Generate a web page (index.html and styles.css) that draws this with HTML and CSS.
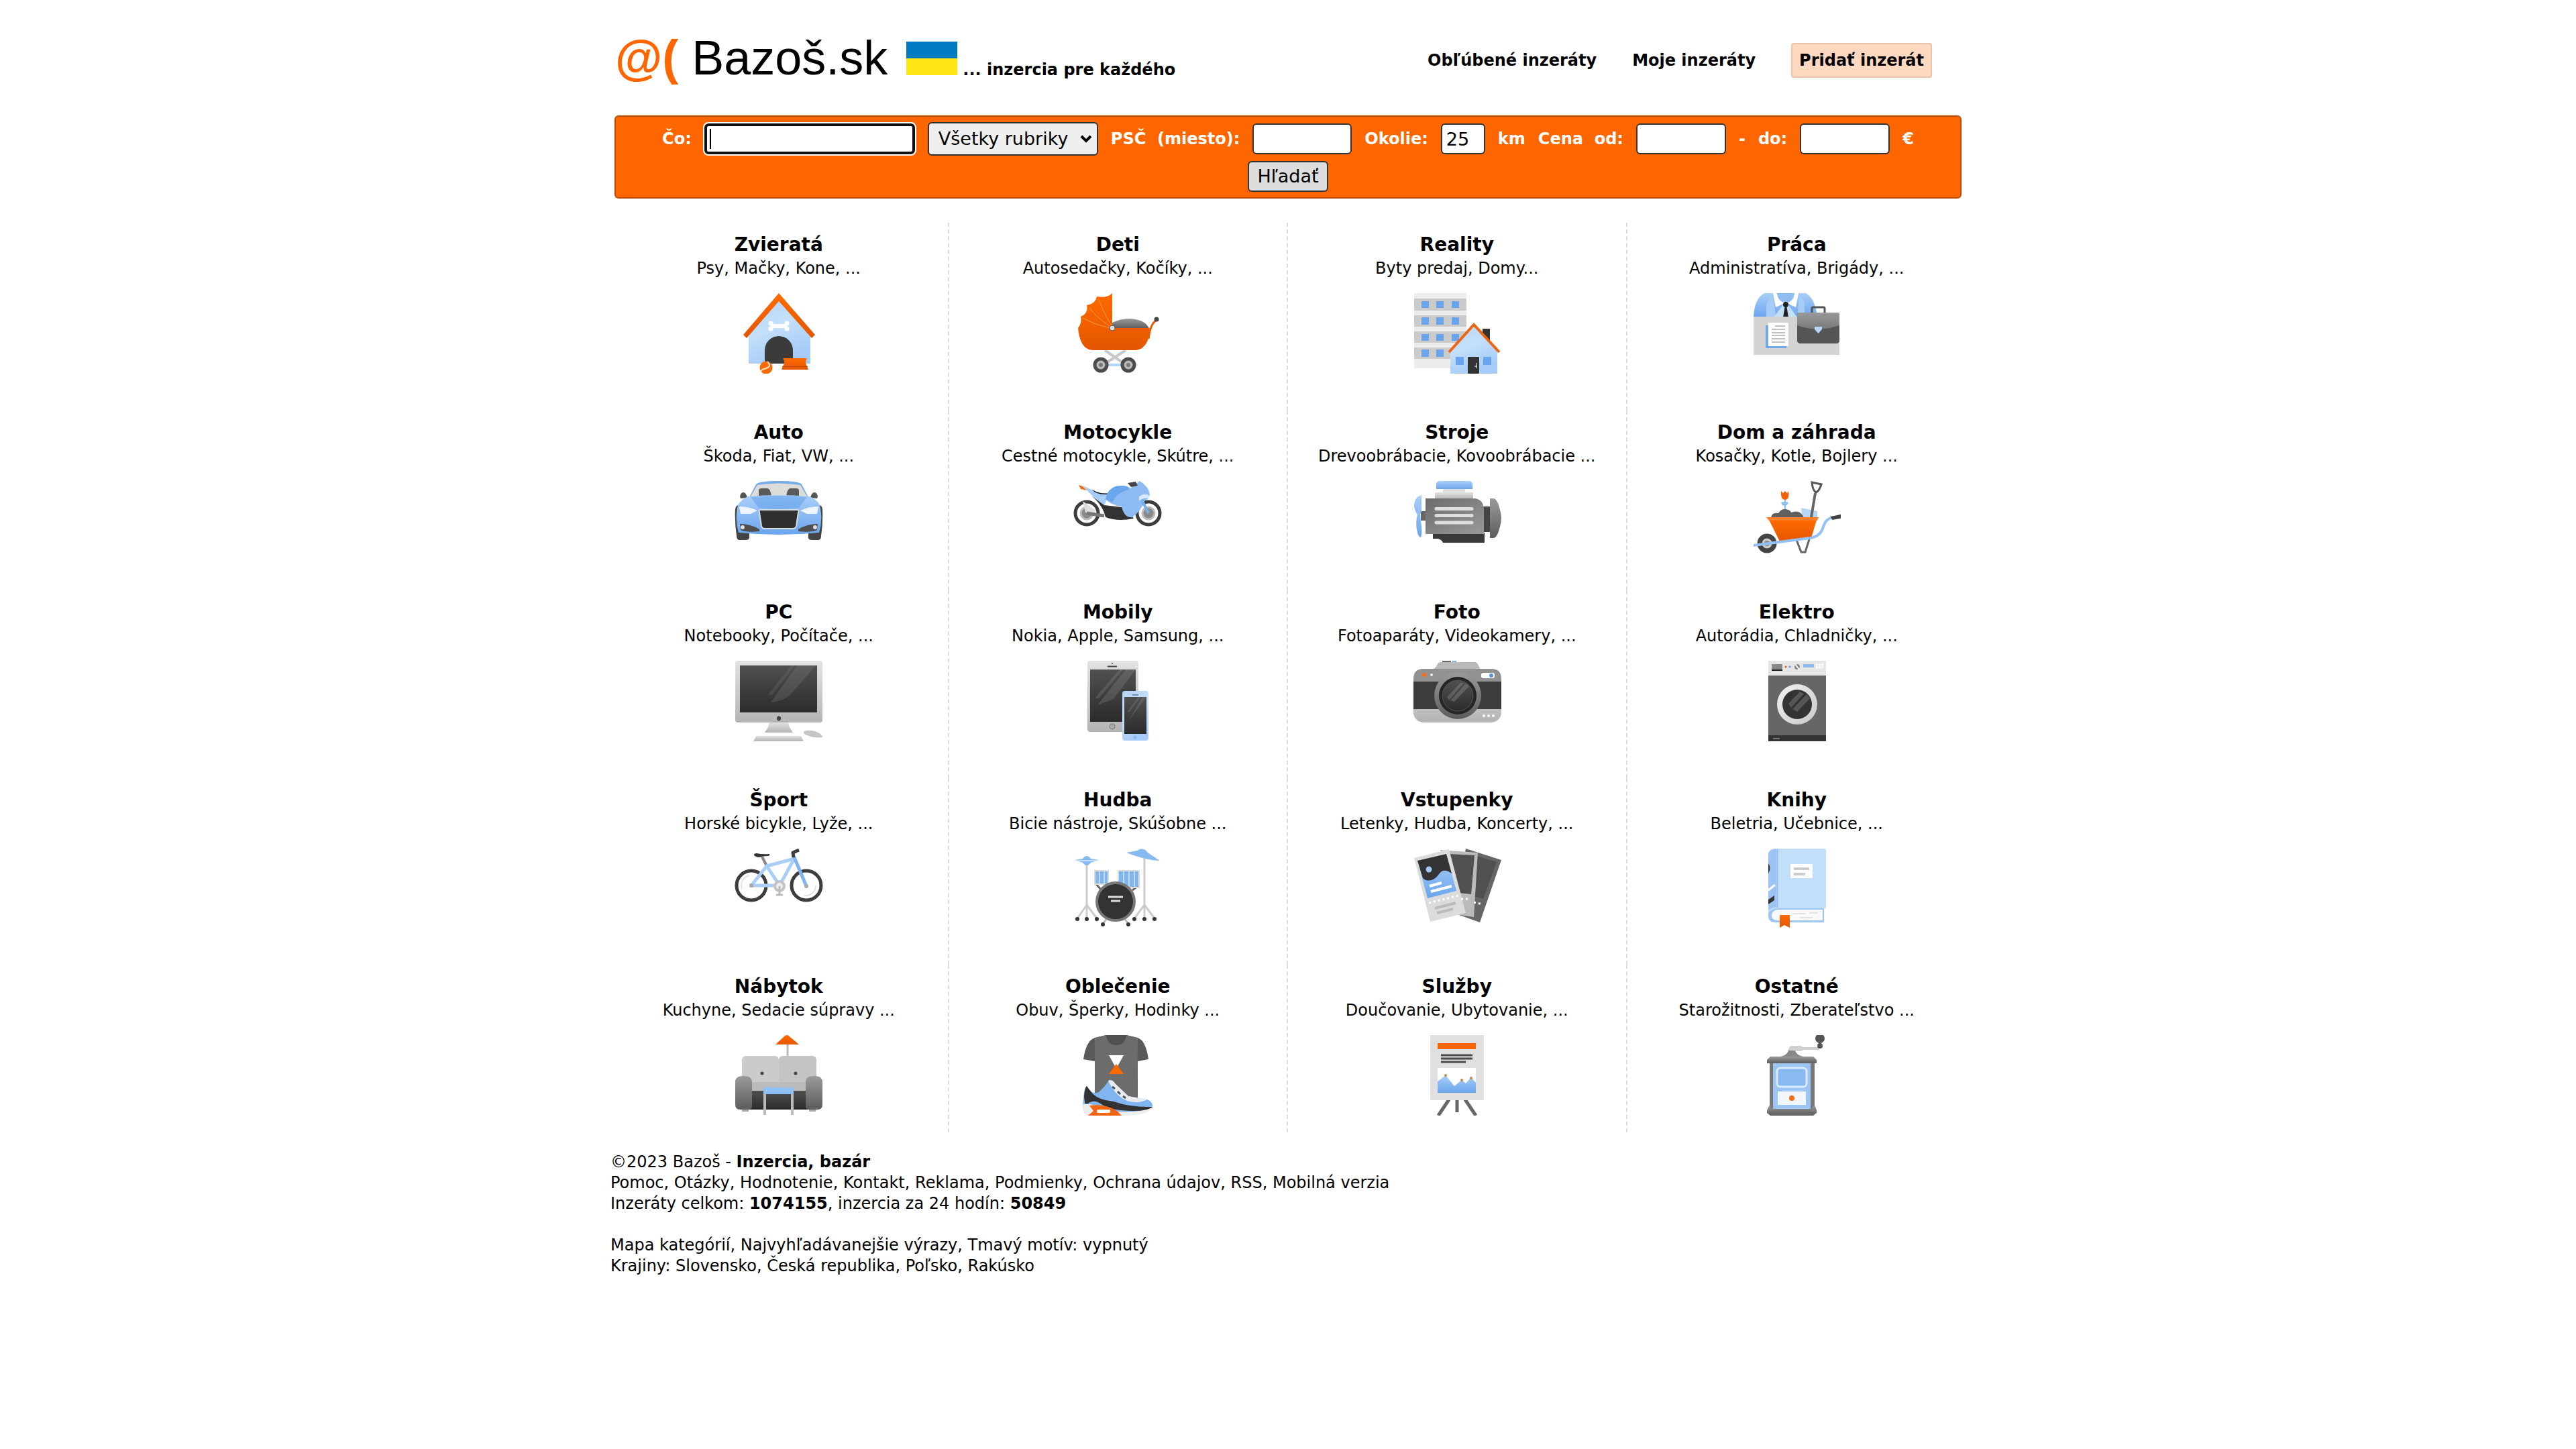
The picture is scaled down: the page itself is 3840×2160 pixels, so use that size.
FILE: index.html
```html
<!DOCTYPE html>
<html lang="sk">
<head>
<meta charset="utf-8">
<meta name="viewport" content="width=device-width, initial-scale=1">
<title>Bazoš.sk - Inzercia, bazár</title>
<link rel="stylesheet" href="styles.css">
</head>
<body>
<svg class="defs" aria-hidden="true">
  <defs>
    <linearGradient id="light" x1="0" y1="0" x2="0.4" y2="1"><stop offset="0" stop-color="#b4d4f8"/><stop offset=".5" stop-color="#c4e0fa"/><stop offset="1" stop-color="#a6cbf7"/></linearGradient>
    <linearGradient id="blue" x1="0" y1="0" x2="0" y2="1"><stop offset="0" stop-color="#a9cff8"/><stop offset="1" stop-color="#6ba5ee"/></linearGradient>
    <linearGradient id="orange" x1="0" y1="0" x2="0" y2="1"><stop offset="0" stop-color="#ff6a00"/><stop offset="1" stop-color="#e45600"/></linearGradient>
    <linearGradient id="dark" x1="0" y1="0" x2="0" y2="1"><stop offset="0" stop-color="#505050"/><stop offset="1" stop-color="#2b2b2b"/></linearGradient>
    <linearGradient id="grey" x1="0" y1="0" x2="0" y2="1"><stop offset="0" stop-color="#9a9a9a"/><stop offset="1" stop-color="#5c5c5c"/></linearGradient>
    <linearGradient id="grey2" x1="0" y1="0" x2="1" y2="1"><stop offset="0" stop-color="#6c6c6c"/><stop offset="1" stop-color="#999"/></linearGradient>
    <linearGradient id="silver" x1="0" y1="0" x2="0" y2="1"><stop offset="0" stop-color="#e2e2e2"/><stop offset="1" stop-color="#b4b4b4"/></linearGradient>
    <linearGradient id="pale" x1="0" y1="0" x2="1" y2="1"><stop offset="0" stop-color="#f2f2f2"/><stop offset="1" stop-color="#c8c8c8"/></linearGradient>
  </defs>
</svg>
<div class="page">
  <header class="header">
    <div class="brand">
      <a class="logo" href="#"><span class="logo-mark">@(</span> Bazoš.sk</a>
      <svg class="flag" viewBox="0 0 76 50" role="img" aria-label="Ukrajina"><rect width="76" height="50" fill="#ffe512"/><rect width="76" height="25" fill="#007ac3"/></svg>
      <b class="slogan">... inzercia pre každého</b>
    </div>
    <nav class="menu">
      <a href="#">Obľúbené inzeráty</a>
      <a href="#">Moje inzeráty</a>
      <a class="add" href="#">Pridať inzerát</a>
    </nav>
  </header>

  <form class="search">
    <label for="co">Čo:</label>
    <input class="field what" id="co" type="text">
    <select class="field rubric" aria-label="Rubrika"><option>Všetky rubriky</option></select>
    <label for="psc">PSČ&nbsp; (miesto):</label>
    <input class="field zip" id="psc" type="text">
    <label for="okolie">Okolie:</label>
    <input class="field radius" id="okolie" type="text" value="25">
    <span>km</span>
    <label for="od">Cena&nbsp; od:</label>
    <input class="field price" id="od" type="text">
    <span>-</span>
    <label for="do">do:</label>
    <input class="field price" id="do" type="text">
    <span>€</span>
    <div class="submit"><button class="field" type="button">Hľadať</button></div>
  </form>

  <main class="grid">
    <section class="cell">
      <a class="title" href="#">Zvieratá</a><p>Psy, Mačky, Kone, ...</p>
      <svg class="icon" viewBox="0 0 132 120">
        <path d="M66 9L113 62V105H21V62Z" fill="url(#light)"/>
        <path d="M66 0L13 62L18 67L66 12L115 67L120 62Z" fill="url(#orange)"/>
        <path d="M45 105V85a21 21 0 0 1 42 0V105Z" fill="#3b3b3b"/>
        <g fill="#fff"><rect x="54" y="46" width="24" height="6"/><circle cx="54" cy="45" r="3.500"/><circle cx="54" cy="53" r="3.500"/><circle cx="78" cy="45" r="3.500"/><circle cx="78" cy="53" r="3.500"/></g>
        <path d="M72 97H108Q104 103 108 109L110 114H70L72 109Q76 103 72 97Z" fill="url(#orange)"/><path d="M71 109.500H109" stroke="#c74c00"/>
        <circle cx="47" cy="111" r="9.500" fill="#ff6a00"/><path d="M49 102Q57 110 44 113Q40 114 39 117" fill="none" stroke="#ffe3cf" stroke-width="2"/>
      </svg>
    </section>
    <section class="cell">
      <a class="title" href="#">Deti</a><p>Autosedačky, Kočíky, ...</p>
      <svg class="icon" viewBox="0 0 132 120">
        <path d="M47 85L77 106M78 85L46 106" stroke="#c9c9c9" stroke-width="4"/><path d="M41 107H82" stroke="#b5d3f7" stroke-width="4"/>
        <path d="M58 53V44Q72 37 86 38Q108 40 113 53Z" fill="url(#grey)"/>
        <path d="M58 0Q50 8 35 5Q33 16 20 18Q23 30 11 35Q13 45 7 52Q10 85 30 85H94Q113 82 114 52H58Z" fill="url(#orange)"/>
        <path d="M58 50Q45 30 38 10M57 51Q36 38 24 22M56 52Q32 47 14 37" fill="none" stroke="#ff9a52"/>
        <path d="M112 68Q115 46 123 41" fill="none" stroke="#ec5c00" stroke-width="3"/><circle cx="124" cy="39" r="3.500" fill="#444"/>
        <circle cx="58" cy="52" r="4" fill="#ddd" stroke="#555"/>
        <g fill="#bbb" stroke="#4b4b4b" stroke-width="5"><circle cx="41" cy="107" r="9"/><circle cx="82" cy="107" r="9"/></g><circle cx="41" cy="107" r="3" fill="#777"/><circle cx="82" cy="107" r="3" fill="#777"/>
      </svg>
    </section>
    <section class="cell">
      <a class="title" href="#">Reality</a><p>Byty predaj, Domy...</p>
      <svg class="icon" viewBox="0 0 132 120">
        <rect x="2" width="78" height="112" fill="#ececec"/><path d="M2 8H80V26H2ZM2 33H80V50H2ZM2 57H80V74H2ZM2 81H80V98H2Z" fill="#cbcbcb"/>
        <path d="M13 12h11v10h-11zM35 12h11v10h-11zM58 12h11v10h-11zM13 36h11v11h-11zM35 36h11v11h-11zM58 36h11v11h-11zM13 61h11v10h-11zM35 61h11v10h-11zM58 61h11v10h-11zM13 84h11v11h-11zM35 84h11v11h-11z" fill="#69a5ee"/>
        <rect x="104" y="53" width="11" height="24" fill="#333"/><path d="M91 47L126 86V120H56V86Z" fill="url(#light)"/>
        <path d="M54 88L91 47L129 88" fill="none" stroke="#f06512" stroke-width="4"/>
        <rect x="82" y="95" width="17" height="25" rx="1" fill="#333"/><path d="M95 104v8M92 109h4" stroke="#fff"/><path d="M64 95h12v12h-12zM105 95h12v12h-12z" fill="#6aa4ec"/>
      </svg>
    </section>
    <section class="cell">
      <a class="title" href="#">Práca</a><p>Administratíva, Brigády, ...</p>
      <svg class="icon" viewBox="0 0 132 120">
        <path d="M2 36Q3 8 18 0H80Q94 8 97 36Z" fill="url(#blue)"/><path d="M21 36V15L30 3L36 36ZM67 36L70 3L78 12V36Z" fill="#a5cbf6"/>
        <path d="M32 36L50 12L67 36Z" fill="#c3dffa"/><path d="M31 0H37Q39 13 50 14L35 21ZM69 0H63Q61 13 50 14L65 21Z" fill="#fff"/><path d="M37 0H63Q61 14 50 14Q39 14 37 0Z" fill="#8dbdf3"/>
        <circle cx="50" cy="17" r="4" fill="#222"/><path d="M49 18H51L54 36H46Z" fill="#222"/>
        <rect x="2" y="35" width="128" height="57" fill="#d3d3d3"/>
        <rect x="20" y="48" width="31" height="34" fill="#6fa9e8"/><rect x="24" y="44" width="30" height="35" fill="#fff"/>
        <path d="M34 49H49M29 54H49M29 59H49M29 63H49M29 68H49M29 73H49" stroke="#aaa" stroke-width="1.500"/>
        <path d="M89 30V22Q89 21 91 21H106Q108 21 108 23V30" fill="none" stroke="#555" stroke-width="3"/>
        <path d="M67 29H130V70Q130 75 125 75H73Q67 75 67 70Z" fill="url(#grey)"/><path d="M67 48Q98 59 130 48V70Q130 75 125 75H73Q67 75 67 70Z" fill="#555"/>
        <path d="M93 50H104V54L98.500 60L93 54Z" fill="#b9d6f7"/>
      </svg>
    </section>

    <section class="cell">
      <a class="title" href="#">Auto</a><p>Škoda, Fiat, VW, ...</p>
      <svg class="icon low" viewBox="0 0 132 108">
        <path d="M1 42Q2 36 6 36V60H22V85Q21 88 17 88H8Q3 88 3 82Q0 62 1 42ZM131 42Q130 36 126 36V60H110V85Q111 88 115 88H124Q129 88 129 82Q132 62 131 42Z" fill="#444"/>
        <path d="M22 24L32 5Q36 0 66 0Q96 0 100 5L110 24Z" fill="#75ace9"/><path d="M24 23L34 6Q66 1 98 6L108 23Z" fill="#dcdcd8"/>
        <path d="M36 22V14Q36 11 40 11H49Q53 11 55 22ZM77 22Q79 11 83 11H92Q96 11 96 14V22Z" fill="#5a5a5a"/>
        <path d="M8 23Q9 17 13 17Q17 17 19 25L9 26ZM124 23Q123 17 119 17Q115 17 113 25L123 26Z" fill="#555"/>
        <path d="M20 23Q66 19 112 23Q122 27 127 36Q132 58 126 77Q66 83 6 77Q0 58 5 36Q10 27 20 23Z" fill="url(#blue)"/>
        <path d="M24 24Q66 20 108 24L96 40Q66 44 36 40Z" fill="#5c9bea" opacity=".5"/>
        <path d="M7 38Q22 38 34 44L24 49H9ZM125 38Q110 38 98 44L108 49H123Z" fill="#edf4fb"/>
        <path d="M38 43H94Q96 43 95 47L92 67Q91 71 87 71H45Q41 71 40 67L37 47Q36 43 38 43Z" fill="#2f2f2f" stroke="#d8dde3" stroke-width="2"/>
        <path d="M8 64Q24 64 37 72V75Q18 77 9 73ZM124 64Q108 64 95 72V75Q114 77 123 73Z" fill="#4e4e4e"/><circle cx="12" cy="69" r="3" fill="#ddd"/><circle cx="120" cy="69" r="3" fill="#ddd"/>
      </svg>
    </section>
    <section class="cell">
      <a class="title" href="#">Motocykle</a><p>Cestné motocykle, Skútre, ...</p>
      <svg class="icon low" viewBox="0 0 132 108">
        <g fill="#fff" stroke="#3c3c3c" stroke-width="5"><circle cx="20" cy="48" r="17"/><circle cx="112" cy="48" r="17"/></g>
        <g fill="#8a8a8a" stroke="#bdbdbd" stroke-width="3"><circle cx="20" cy="48" r="9"/><circle cx="112" cy="48" r="9"/></g>
        <path d="M14 30L35 45L28 49L18 47Z" fill="#ddd"/><path d="M20 48L46 52" stroke="#777" stroke-width="5"/>
        <path d="M8 6L14 8L20 14L11 12Z" fill="#f56a14"/><path d="M14 7Q30 14 36 18L54 19L46 36Q26 22 14 7Z" fill="#a6cdf8"/>
        <path d="M27 22L46 36L80 40L90 56Q66 61 48 54Q44 36 27 22Z" fill="#333"/>
        <path d="M27 12Q38 20 53 18L56 16L50 20Q34 21 27 12Z" fill="#222"/>
        <path d="M50 19Q58 6 72 7Q82 7 85 11L99 0Q114 10 114 22Q112 28 106 29Q102 44 88 54Q76 56 72 38Q56 36 48 27Z" fill="#8cbcf3"/>
        <path d="M50 19Q58 6 72 7Q84 8 82 13Q64 18 58 32L48 27Z" fill="#6aa6ec"/>
        <path d="M102 28L112 48" stroke="#76aeee" stroke-width="4"/><path d="M98 23Q107 17 114 22L112 26Q104 24 98 30Z" fill="#d7e9fc"/>
        <path d="M81 3L93 1L96 7L86 9Z" fill="#444"/>
      </svg>
    </section>
    <section class="cell">
      <a class="title" href="#">Stroje</a><p>Drevoobrábacie, Kovoobrábacie ...</p>
      <svg class="icon low" viewBox="0 0 132 108">
        <path d="M35 12V5Q35 0 41 0H83Q89 0 89 5V12Z" fill="url(#blue)"/><rect x="45" y="12" width="33" height="6" fill="#ddd"/><rect x="33" y="17" width="57" height="10" fill="url(#silver)"/>
        <rect x="12" y="45" width="8" height="14" fill="#666"/><rect x="105" y="38" width="11" height="38" fill="#444"/>
        <path d="M30 77H107V92H45Q43 87 37 86H30Z" fill="#3a3a3a"/><path d="M19 26H93Q106 28 106 44V79H19Z" fill="url(#grey2)"/>
        <path d="M35 41.500H88M35 51.500H88M35 62H88" stroke="#dedede" stroke-width="5" stroke-linecap="round"/>
        <path d="M115 26H120Q126 26 130 43Q134 55 130 68Q126 85 120 85H115Z" fill="url(#grey)"/>
        <path d="M13 21Q2 24 2 38Q3 45 7 50Q4 60 6 73Q8 84 12 84Q14 80 13 68L11 50L13 45Z" fill="url(#blue)"/>
      </svg>
    </section>
    <section class="cell">
      <a class="title" href="#">Dom a záhrada</a><p>Kosačky, Kotle, Bojlery ...</p>
      <svg class="icon low" viewBox="0 0 132 108">
        <path d="M73 40L97 45V55H74Z" fill="#b5d6f8"/><path d="M94 18L88 54" stroke="#666" stroke-width="4"/><path d="M89 2L103 5Q100 15 95 17Q90 14 89 2Z" fill="none" stroke="#555" stroke-width="3"/>
        <path d="M49 28V44" stroke="#8dbaf0" stroke-width="2"/><path d="M43 32Q49 30 54 32Q52 37 49 37Q44 37 43 32Z" fill="#8fbdf2"/><path d="M43 15L46 18L49 15L52 18L54 15Q56 28 49 28Q42 28 43 15Z" fill="#f06410"/>
        <path d="M28 55Q29 46 39 48Q43 41 50 42Q57 43 58 47Q72 42 77 55Z" fill="#606060"/>
        <path d="M66 88L73 106H79L85 87" fill="none" stroke="#666" stroke-width="3"/>
        <path d="M25 58H96L88 85L41 90Z" fill="url(#orange)"/><path d="M21 54H99L97 59H25Z" fill="#ff7d25"/>
        <circle cx="22" cy="93" r="11" fill="#ccc" stroke="#444" stroke-width="7"/><circle cx="22" cy="93" r="4" fill="#888"/>
        <path d="M2 96L86 85Q102 83 106 68Q110 55 122 54" fill="none" stroke="#93c1f5" stroke-width="4"/><path d="M118 54L131 51V55L120 57Z" fill="#444" stroke="#444" stroke-width="2"/>
      </svg>
    </section>

    <section class="cell">
      <a class="title" href="#">PC</a><p>Notebooky, Počítače, ...</p>
      <svg class="icon" viewBox="0 0 132 120">
        <rect y="0" x="1" width="130" height="92" rx="4" fill="url(#silver)"/><rect x="8" y="7" width="115" height="70" fill="url(#dark)"/>
        <path d="M84 7H90L56 51H50Z" fill="#777" opacity=".25"/><path d="M93 7H121L84 50Q74 60 54 62Z" fill="#888" opacity=".25"/>
        <ellipse cx="66" cy="86" rx="3" ry="3.500" fill="#444"/><path d="M52 92H80L82 99L87 107H45L50 99Z" fill="url(#silver)"/><path d="M32 112H99L103 120H28Z" fill="url(#silver)"/>
        <path d="M103 106Q107 102 120 105Q131 109 131 114Q120 116 108 111Q102 109 103 106Z" fill="#c5c5c5"/>
      </svg>
    </section>
    <section class="cell">
      <a class="title" href="#">Mobily</a><p>Nokia, Apple, Samsung, ...</p>
      <svg class="icon" viewBox="0 0 132 120">
        <rect x="21" width="76" height="106" rx="4" fill="url(#silver)"/><rect x="25" y="13" width="68" height="78" fill="url(#dark)"/><path d="M69 13H74L38 56H32ZM78 13H93L60 57L36 66Z" fill="#999" opacity=".25"/>
        <path d="M51 8.500H65" stroke="#444" stroke-width="2"/><circle cx="58" cy="4" r="1" fill="#444"/><circle cx="58" cy="98" r="4" fill="#aaa" stroke="#777"/>
        <rect x="73" y="45" width="39" height="74" rx="4" fill="url(#light)"/><rect x="76" y="54" width="33" height="55" fill="url(#dark)"/><path d="M97 54H100L84 76H80ZM103 54H109L82 90Z" fill="#999" opacity=".25"/>
        <path d="M88 51H97" stroke="#345"/><circle cx="92" cy="114" r="2.500" fill="#8dbaf0"/>
      </svg>
    </section>
    <section class="cell">
      <a class="title" href="#">Foto</a><p>Fotoaparáty, Videokamery, ...</p>
      <svg class="icon" viewBox="0 0 132 120">
        <path d="M44 0h13v4h-13z" fill="#666"/><path d="M59 0h6v4h-6z" fill="#7db1ee"/><path d="M29 13Q33 12 37 5Q38 2 42 2H92Q96 2 98 7L101 13Z" fill="#b9b9b9"/>
        <rect x="1" y="12" width="131" height="80" rx="15" fill="url(#silver)"/><path d="M1 32V27Q1 12 16 12H117Q132 12 132 27V32Z" fill="#919191"/>
        <rect x="1" y="31" width="131" height="41" fill="#3c3c3c"/><circle cx="67" cy="52" r="35" fill="url(#grey)"/><circle cx="67" cy="52" r="28" fill="#252525"/><circle cx="67" cy="52" r="23" fill="url(#dark)" stroke="#555"/>
        <path d="M71 33H76L54 59L51 54ZM79 34L84 38L62 61L56 59Z" fill="#aaa" opacity=".3"/>
        <circle cx="17" cy="21" r="3" fill="#ff6a10"/><circle cx="28" cy="21" r="2" fill="#eee"/><rect x="102" y="18" width="20" height="8" rx="3" fill="#fff"/><circle cx="117" cy="22" r="3" fill="#5b94e0"/>
        <g fill="#fff"><circle cx="106" cy="82" r="2"/><circle cx="113" cy="82" r="2"/><circle cx="120" cy="82" r="2"/></g>
      </svg>
    </section>
    <section class="cell">
      <a class="title" href="#">Elektro</a><p>Autorádia, Chladničky, ...</p>
      <svg class="icon" viewBox="0 0 132 120">
        <rect x="24" y="22" width="86" height="89" fill="#666"/><rect x="24" width="86" height="22" fill="#e6e6e6"/><rect x="24" y="111" width="86" height="9" fill="#333"/>
        <rect x="29" y="5" width="16" height="10" rx="1" fill="#888"/><path d="M29 14h16" stroke="#222" stroke-width="2"/><circle cx="50" cy="9" r="1.500" fill="#e65a00"/><circle cx="56" cy="9" r="1.500" fill="#5e9be9"/><circle cx="67" cy="9" r="4" fill="#888"/><path d="M64 5L70 13" stroke="#fff" stroke-width="2"/><rect x="76" y="5" width="16" height="5" fill="#8dbaf0"/>
        <path d="M95 6h11M95 10h11" stroke="#fff" stroke-width="3" stroke-dasharray="3 1"/>
        <circle cx="67" cy="65" r="30" fill="url(#pale)"/><circle cx="67" cy="65" r="22" fill="#333"/><path d="M71 46L77 49L58 70L54 64ZM81 50L86 56L67 76L60 72Z" fill="#999" opacity=".35"/><path d="M31 116h10" stroke="#777" stroke-width="2"/>
      </svg>
    </section>

    <section class="cell">
      <a class="title" href="#">Šport</a><p>Horské bicykle, Lyže, ...</p>
      <svg class="icon mid" viewBox="0 0 132 118">
        <g fill="none" stroke="#3d3d3d" stroke-width="5"><circle cx="25" cy="55" r="22"/><circle cx="107" cy="55" r="22"/></g>
        <path d="M11 60A15 15 0 0 1 22 40M121 55A15 15 0 0 1 104 70" fill="none" stroke="#ddd" stroke-width="1.500"/>
        <path d="M41 12L48 26" stroke="#888" stroke-width="4"/>
        <path d="M25 55L48 26L89 15L67 55L48 26M25 55H67" fill="none" stroke="#a9cff8" stroke-width="5" stroke-linejoin="round"/><path d="M89 13L107 56" stroke="#7fb4f0" stroke-width="5" stroke-linecap="round"/>
        <path d="M29 9Q29 7 33 7Q42 9 52 8Q53 10 50 11Q41 11 37 13Q29 12 29 9Z" fill="#333"/><path d="M88 13L87 6L96 2" fill="none" stroke="#3d3d3d" stroke-width="5" stroke-linejoin="round"/>
        <circle cx="67" cy="56" r="9" fill="#c3c3c3"/><circle cx="67" cy="56" r="5" fill="#eee"/><path d="M67 56V69M62 69H72" stroke="#bbb" stroke-width="3"/><circle cx="25" cy="55" r="3" fill="#aaa"/><circle cx="107" cy="56" r="3" fill="#aaa"/>
      </svg>
    </section>
    <section class="cell">
      <a class="title" href="#">Hudba</a><p>Bicie nástroje, Skúšobne ...</p>
      <svg class="icon mid" viewBox="0 0 132 118">
        <path d="M20 22V104M20 84L6 104M20 84L35 104M106 12V104M106 84L91 104M106 84L121 104" fill="none" stroke="#ccc" stroke-width="3"/>
        <path d="M2 17L14 15Q20 7 26 15L38 17L26 21Q20 29 14 21Z" fill="#86baf0"/><path d="M4 18H36" stroke="#fff"/><path d="M79 6L95 3Q104 -3 111 6L129 18Q110 18 79 6Z" fill="#86baf0"/>
        <path d="M34 53L42 62M96 56L88 62" stroke="#666" stroke-width="3"/>
        <g stroke="#dcdcdc" stroke-width="2" fill="#80b7ee"><rect x="32" y="33" width="20" height="20"/><rect x="67" y="33" width="31" height="25"/></g><path d="M39 34V52M46 34V52M75 34V57M83 34V57M91 34V57" stroke="#d7e7f8" stroke-width="1.500"/>
        <path d="M50 104L45 111M76 104L81 111" stroke="#bbb" stroke-width="3"/><circle cx="63" cy="79" r="28" fill="#333" stroke="#777" stroke-width="4"/><path d="M52 72H74M56 78H70" stroke="#ddd" stroke-width="3"/>
        <g fill="#333"><circle cx="6" cy="105" r="3"/><circle cx="20" cy="105" r="3"/><circle cx="35" cy="105" r="3"/><circle cx="91" cy="105" r="3"/><circle cx="106" cy="105" r="3"/><circle cx="121" cy="105" r="3"/><circle cx="44" cy="113" r="3"/><circle cx="82" cy="113" r="3"/></g>
      </svg>
    </section>
    <section class="cell">
      <a class="title" href="#">Vstupenky</a><p>Letenky, Hudba, Koncerty, ...</p>
      <svg class="icon mid" viewBox="0 0 132 118">
        <path d="M79 0L132 17L100 110L61 96Z" fill="#666"/><path d="M92 10L125 20L105 75L88 70Z" fill="#505050"/><path d="M41 2L97 6L91 102L64 98Z" fill="#bbb"/><path d="M54 8L92 10L87 68L60 65Z" fill="#505050"/>
        <path d="M2 14L54 1L79 96L26 109Z" fill="#dcdcdc"/><path d="M7 18L50 8L65 63L22 74Z" fill="url(#blue)"/><path d="M7 18L50 8L58 37Q46 28 39 38Q31 50 19 47L15 44Z" fill="#333"/><circle cx="24" cy="31" r="4.500" fill="#a5c9f4"/>
        <path d="M25 56L43 51M27 64L58 56" stroke="#fff" stroke-width="4"/><path d="M24 81L68 70" stroke="#fff" stroke-width="3" stroke-dasharray="3 4"/><path d="M72 75H84M91 80L104 83" stroke="#fff" stroke-width="3" stroke-dasharray="3 4"/><path d="M33 89L64 81M36 96L60 90" stroke="#bbb" stroke-width="4"/>
      </svg>
    </section>
    <section class="cell">
      <a class="title" href="#">Knihy</a><p>Beletria, Učebnice, ...</p>
      <svg class="icon mid" viewBox="0 0 132 118">
        <path d="M24 10V100Q24 110 35 110H107V88H38Z" fill="#9cc5f2"/><path d="M38 91H105V107H38Q28 106 29 99Q30 92 38 91Z" fill="#fafafa"/><path d="M60 97H80M85 96H98M70 103H90" stroke="#ccc"/>
        <path d="M24 97V9Q24 0 36 0H107Q110 0 110 3V89H40Q28 89 24 97Z" fill="#c2dff9"/><path d="M24 92V9Q24 1 36 0V87Q28 88 24 92Z" fill="#9cc4f3"/><path d="M37.500 1V88" stroke="#90baf0" stroke-width="2"/>
        <path d="M24 22Q29 29 24 37ZM24 76L33 70V77L24 83Z" fill="#333"/><path d="M24 62L34 54" stroke="#fff" stroke-width="3"/>
        <rect x="57" y="23" width="33" height="21" fill="#fff"/><path d="M62 30H85M62 38H79" stroke="#ccc" stroke-width="4"/><path d="M41 99H56V118L48 114L41 118Z" fill="url(#orange)"/>
      </svg>
    </section>

    <section class="cell last">
      <a class="title" href="#">Nábytok</a><p>Kuchyne, Sedacie súpravy ...</p>
      <svg class="icon" viewBox="0 0 132 120">
        <path d="M79 12V34" stroke="#bbb" stroke-width="3"/><path d="M78 0Q81 0 83 3L96 14H61L73 3Q75 0 78 0Z" fill="url(#orange)"/>
        <rect x="11" y="31" width="55" height="60" rx="6" fill="#cbcbcb"/><rect x="66" y="31" width="56" height="60" rx="6" fill="#c4c4c4"/><path d="M24 70H108V84H24Z" fill="#bbb"/><circle cx="41" cy="57" r="2.500" fill="#444"/><circle cx="91" cy="57" r="2.500" fill="#444"/>
        <path d="M11 110h10v4h-10zM111 110h10v4h-10z" fill="#aaa"/><rect x="20" y="83" width="90" height="28" fill="url(#dark)"/>
        <path d="M1 68Q3 60 14 61Q26 61 26 70V106Q26 111 21 111H8Q1 111 1 103ZM131 68Q129 60 118 61Q106 61 106 70V106Q106 111 111 111H124Q131 111 131 103Z" fill="url(#grey)"/>
        <rect x="43" y="78" width="45" height="10" fill="#8fc0f5"/><path d="M45 88V119M86 88V119" stroke="#bbb" stroke-width="4"/>
      </svg>
    </section>
    <section class="cell last">
      <a class="title" href="#">Oblečenie</a><p>Obuv, Šperky, Hodinky ...</p>
      <svg class="icon" viewBox="0 0 132 120">
        <path d="M49 0H79L96 4Q108 8 112 36L96 39V95H32V39L15 36Q19 8 32 4Z" fill="#5a5a5a"/><path d="M49 0H79L96 4L95 95H32V4Z" fill="#6c6c6c"/><path d="M49 0H79Q77 15 64 15Q51 15 49 0Z" fill="#505050"/>
        <path d="M53 30H75L64 50Z" fill="#fff"/><path d="M64 43L75 58H53Z" fill="#ff6900"/>
        <path d="M15 95Q16 78 20 76Q28 90 38 85Q48 76 53 67Q59 66 62 72L82 91Q98 94 110 96Q119 99 118 108Q100 120 24 120Q12 119 15 95Z" fill="#80b5f0"/>
        <path d="M52 68Q59 66 62 72L82 91L110 96Q98 103 80 98Q62 90 52 68Z" fill="#ececf0"/><path d="M16 92Q17 78 20 76L26 84Q34 96 60 99Q86 108 118 107L112 112Q60 116 42 103Q28 93 18 106Z" fill="#333"/>
        <path d="M15 103Q20 101 40 106L66 114Q100 116 118 108Q113 120 70 120H24Q12 119 15 103Z" fill="#eee"/><path d="M24 105Q48 102 65 113L72 120H22L30 113Z" fill="#f56410"/><rect x="35" y="111" width="20" height="5" rx="2" fill="#fff"/>
        <path d="M58 77L62 80M66 84L70 88M74 91L78 94" stroke="#456" stroke-width="3"/>
      </svg>
    </section>
    <section class="cell last">
      <a class="title" href="#">Služby</a><p>Doučovanie, Ubytovanie, ...</p>
      <svg class="icon" viewBox="0 0 132 120">
        <path d="M54 96L38 120M78 96L94 120M66 96V115" stroke="#666" stroke-width="5"/><rect x="26" width="80" height="97" fill="#e0e0e0"/><rect x="37" y="12" width="57" height="9" fill="#fa6400"/>
        <path d="M42 30H89M42 35H89M42 40H79" stroke="#4a4a4a" stroke-width="3"/><rect x="37" y="49" width="57" height="37" fill="#fff"/><path d="M37 69L49 60L62 76L73 67L79 72L87 63L94 71V86H37Z" fill="url(#blue)"/>
        <g fill="#c88a3c"><circle cx="49" cy="60" r="2"/><circle cx="73" cy="67" r="2"/><circle cx="87" cy="64" r="2"/></g>
      </svg>
    </section>
    <section class="cell last">
      <a class="title" href="#">Ostatné</a><p>Starožitnosti, Zberateľstvo ...</p>
      <svg class="icon" viewBox="0 0 132 120">
        <path d="M53 23L57 16H72L76 18H100V22H78L72 24Z" fill="#d0d0d0"/><circle cx="101" cy="5" r="7" fill="#555"/><path d="M101 8V18" stroke="#555" stroke-width="4"/><circle cx="101" cy="16" r="4" fill="#555"/>
        <path d="M42 32Q52 30 54 23H64Q66 30 76 32Z" fill="#888"/><path d="M27 32H91L96 37V42H22V37Z" fill="url(#grey)"/><rect x="26" y="42" width="67" height="72" fill="#777"/><rect x="31" y="42" width="56" height="68" fill="#9dc5f4"/>
        <rect x="37" y="49" width="44" height="28" rx="5" fill="#8ab8f0" stroke="#d9ecfd" stroke-width="3"/><rect x="38" y="84" width="42" height="20" fill="#f1f6fc"/><circle cx="59" cy="94" r="4" fill="#fa6b10"/>
        <path d="M26 104L30 110H88L93 104L96 112V116L91 120H27L22 116V112Z" fill="url(#grey)"/>
      </svg>
    </section>
  </main>

  <footer class="footer">
    <p>©2023 Bazoš - <b>Inzercia, bazár</b></p>
    <p><a href="#">Pomoc</a>, <a href="#">Otázky</a>, <a href="#">Hodnotenie</a>, <a href="#">Kontakt</a>, <a href="#">Reklama</a>, <a href="#">Podmienky</a>, <a href="#">Ochrana údajov</a>, <a href="#">RSS</a>, <a href="#">Mobilná verzia</a></p>
    <p>Inzeráty celkom: <b>1074155</b>, inzercia za 24 hodín: <b>50849</b></p>
    <p class="links"><a href="#">Mapa kategórií</a>, <a href="#">Najvyhľadávanejšie výrazy</a>, <a href="#">Tmavý motív: vypnutý</a></p>
    <p>Krajiny: <a href="#">Slovensko</a>, <a href="#">Česká republika</a>, <a href="#">Poľsko</a>, <a href="#">Rakúsko</a></p>
  </footer>
</div>
</body>
</html>
```
FILE: styles.css
```css
* { box-sizing: border-box; }

body {
  margin: 0;
  background: #fff;
  color: #000;
  font: 24px/28px "DejaVu Sans", Verdana, sans-serif;
}

a { color: inherit; text-decoration: none; }
p { margin: 0; }

.defs { position: absolute; width: 0; height: 0; }

.page { max-width: 2022px; margin: 0 auto; }

/* Header */
.header {
  display: flex;
  justify-content: space-between;
  align-items: center;
  padding: 48px 51px 44px 8px;
}

.brand { display: flex; align-items: flex-end; }
.logo { margin-bottom: 4px; font: 72px/76px "Liberation Sans", Arial, sans-serif; }
.logo-mark { color: #f60; font-weight: bold; }
.flag { width: 76px; height: 50px; margin: 0 8px 16px 28px; }
.slogan { margin-bottom: 10px; }

.menu {
  display: flex;
  align-items: center;
  gap: 53px;
  padding-top: 4px;
  font-weight: bold;
}

.add {
  padding: 10px;
  border: 2px solid #e8c3ad;
  border-radius: 4px;
  background: #ffd8c0;
}

/* Search bar */
.search {
  display: flex;
  flex-wrap: wrap;
  justify-content: center;
  align-items: center;
  gap: 8px 19px;
  margin: 0 7px;
  padding: 8px;
  border: 2px solid #b84d0a;
  border-radius: 6px;
  background: #f60;
  color: #fff;
  font-weight: bold;
}

.field {
  height: 46px;
  margin: 0;
  padding: 0 6px;
  border: 2px solid #333;
  border-radius: 6px;
  background: #fff;
  color: #000;
  font: 27px/32px "DejaVu Sans", Verdana, sans-serif;
}

.what {
  width: 314px;
  border: 4px solid #101010;
  outline: 2px solid #fff;
  background: linear-gradient(#000, #000) 4px center / 2px 30px no-repeat #fff;
}

.rubric {
  width: 254px;
  height: 50px;
  padding: 0 14px;
  appearance: none;
  background: #efefef url("data:image/svg+xml,%3Csvg xmlns='http://www.w3.org/2000/svg' width='20' height='14'%3E%3Cpath d='M3 3l7 7 7-7' fill='none' stroke='black' stroke-width='4'/%3E%3C/svg%3E") no-repeat right 6px center;
}

.zip { width: 148px; }
.radius { width: 66px; }
.price { width: 134px; }

.submit { flex: 0 0 100%; display: flex; justify-content: center; }
.submit .field { padding: 0 12px; background: #ddd; }

/* Categories */
.grid {
  display: grid;
  grid-template-columns: repeat(4, 1fr);
  margin-top: 36px;
}

.cell {
  padding: 15px 0 55px;
  border-right: 2px dashed #ddd;
  text-align: center;
}

.cell:nth-child(4n) { border-right: 0; }
.last { padding-bottom: 25px; }

.title {
  display: block;
  margin-bottom: 3px;
  font-size: 28px;
  line-height: 36px;
  font-weight: bold;
}

.icon { display: block; width: 132px; height: 120px; margin: 23px auto 0; }
.low { height: 108px; }
.mid { height: 118px; }

/* Footer */
.footer { padding: 29px 0 48px 1px; line-height: 31px; }
.links { margin-top: 31px; }
```
